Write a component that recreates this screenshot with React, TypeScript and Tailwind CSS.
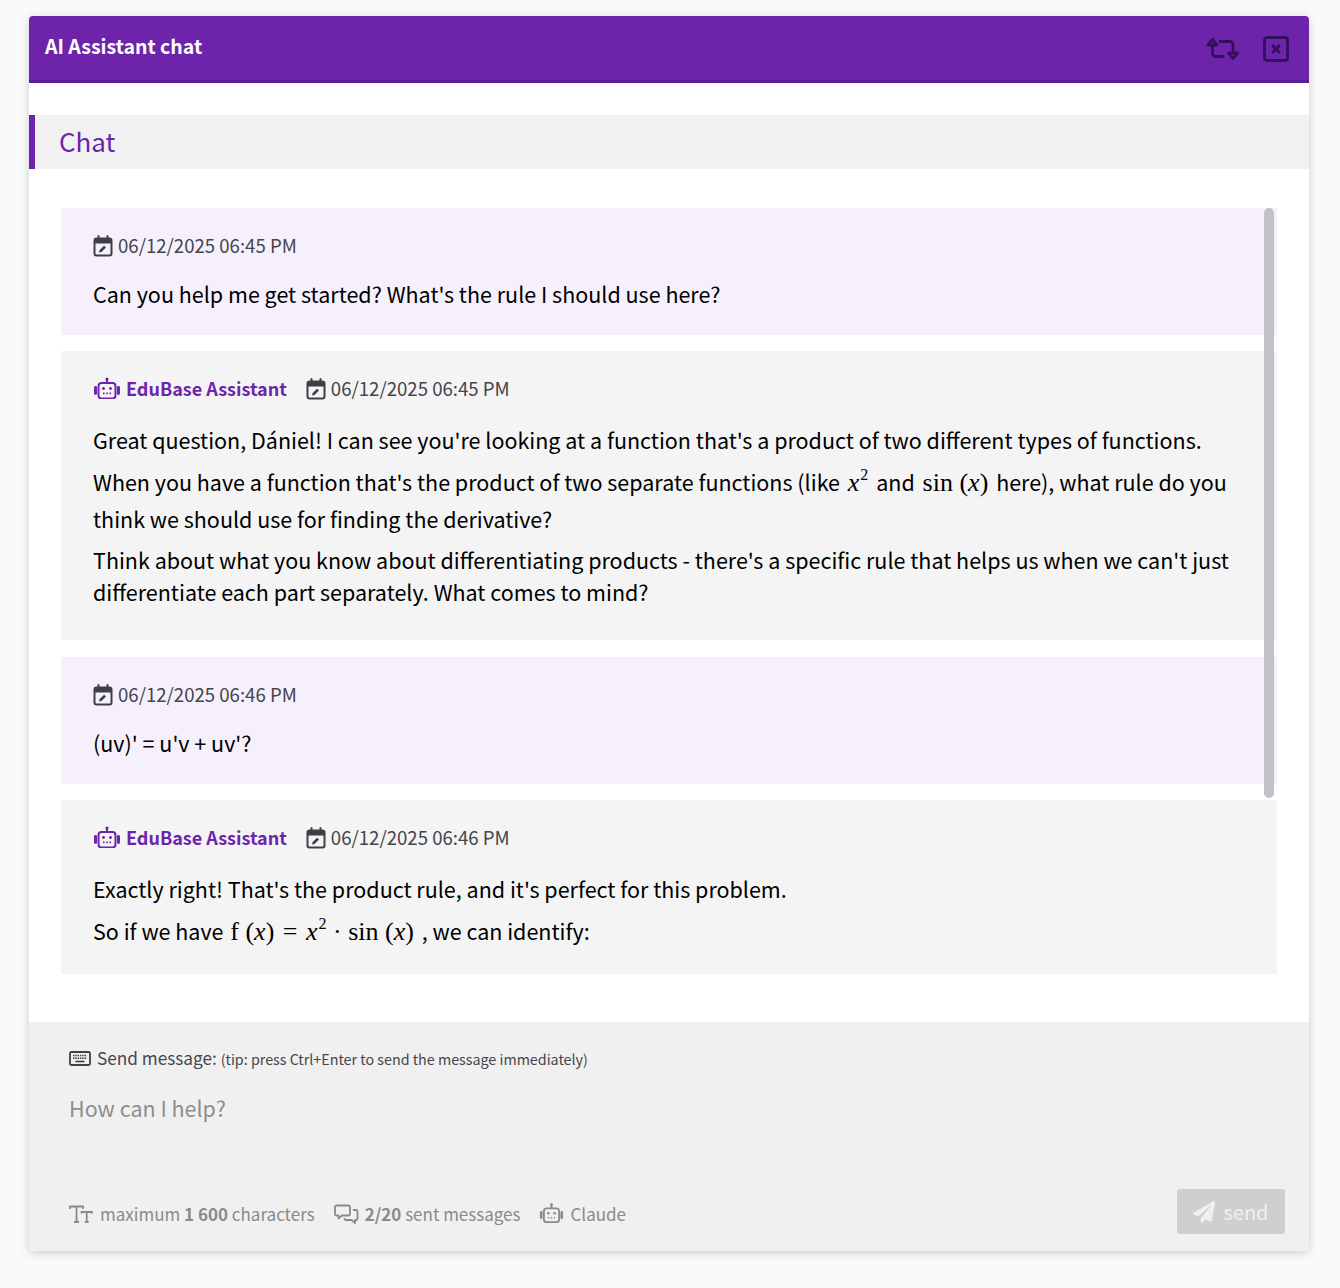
import { FaPaperPlane } from "react-icons/fa";

const font = { fontFamily: '"Noto Sans CJK SC", "Noto Sans", sans-serif' };

function CalendarIcon() {
  return (
    <svg width="20" height="22" viewBox="0 0 20 22" fill="none" className="shrink-0">
      <rect x="1.500" y="3.500" width="17" height="17" rx="2" stroke="#3f3f46" strokeWidth="2" />
      <path d="M1.500 5.500a2 2 0 0 1 2-2h13a2 2 0 0 1 2 2v3h-17z" fill="#3f3f46" />
      <path d="M5.500 1v4M14.500 1v4" stroke="#3f3f46" strokeWidth="2" strokeLinecap="round" />
      <path d="M6 17.500l.6-2.500 4.500-4.300 1.900 1.900-4.500 4.300z" fill="#3f3f46" />
    </svg>
  );
}

function RobotIcon({ color, size = 28 }: { color: string; size?: number }) {
  return (
    <svg width={size} height={size * 0.82} viewBox="0 0 28 23" fill="none" className="-mt-[2px] shrink-0">
      <rect x="5.500" y="6" width="17" height="15.500" rx="3" stroke={color} strokeWidth="2" />
      <path d="M14 6V2" stroke={color} strokeWidth="2" />
      <circle cx="14" cy="2" r="1.600" fill={color} />
      <path d="M2.500 10.500v6M25.500 10.500v6" stroke={color} strokeWidth="3" strokeLinecap="round" />
      <circle cx="10.500" cy="11.500" r="1.500" fill={color} />
      <circle cx="17.500" cy="11.500" r="1.500" fill={color} />
      <path d="M10 16.500h1.600M13.200 16.500h1.600M16.400 16.500h1.600" stroke={color} strokeWidth="1.800" />
    </svg>
  );
}

function SwapIcon() {
  return (
    <svg width="34" height="22" viewBox="0 0 34 22" fill="none" stroke="#33105c" strokeWidth="2.800" strokeLinejoin="round">
      <path d="M6.500 8v7.500a3 3 0 0 0 3 3H17" strokeLinecap="round" />
      <path d="M14 3.500h10a3 3 0 0 1 3 3V14" strokeLinecap="round" />
      <path d="M6.500 1.500L2 7h9z" />
      <path d="M27 20.500L22.500 15h9z" />
    </svg>
  );
}

function CloseIcon() {
  return (
    <svg width="26" height="26" viewBox="0 0 26 26" fill="none" stroke="#33105c" strokeWidth="2.800">
      <rect x="1.500" y="1.500" width="23" height="23" rx="2.500" />
      <path d="M9 9l8 8M17 9l-8 8" strokeWidth="3" />
    </svg>
  );
}

function KeyboardIcon() {
  return (
    <svg width="22" height="15" viewBox="0 0 22 15" fill="none" className="shrink-0">
      <rect x="1" y="1" width="20" height="13" rx="1.500" stroke="#3f3f46" strokeWidth="1.800" />
      <path d="M4 4.500h14M4 7.200h14" stroke="#3f3f46" strokeWidth="1.600" strokeDasharray="1.500 0.800" />
      <path d="M6.500 10.500h9" stroke="#3f3f46" strokeWidth="1.600" />
    </svg>
  );
}

function TextSizeIcon() {
  return (
    <svg width="24" height="18" viewBox="0 0 24 18" fill="none" stroke="#8a8a8a" strokeWidth="1.800" className="shrink-0">
      <path d="M1 4V1.500h13V4M7.500 1.500V17M5 17h5" />
      <path d="M12.500 8.500V7h10.500v1.500M17.700 7v10M15.800 17h3.800" />
    </svg>
  );
}

function MessagesIcon() {
  return (
    <svg width="25" height="20" viewBox="0 0 25 20" fill="none" stroke="#8a8a8a" strokeWidth="1.800" strokeLinejoin="round" className="shrink-0">
      <path d="M2.500 1.500h12a1.500 1.500 0 0 1 1.500 1.500v7a1.500 1.500 0 0 1-1.500 1.500H8l-3.500 3v-3h-2A1.500 1.500 0 0 1 1 10V3a1.500 1.500 0 0 1 1.500-1.500z" />
      <path d="M19 6h3a1.500 1.500 0 0 1 1.500 1.500v7A1.500 1.500 0 0 1 22 16h-1v3l-3.500-3h-5.500a1.500 1.500 0 0 1-1.500-1.500V14" />
    </svg>
  );
}

function Var() {
  return <span className="italic">x</span>;
}

function Math({ children }: { children: React.ReactNode }) {
  return (
    <span className="mx-[3px] text-[26px] leading-none" style={{ fontFamily: '"Liberation Serif", serif' }}>
      {children}
    </span>
  );
}

function Sup() {
  return <span className="relative top-[-11px] ml-[1px] text-[16px] leading-none">2</span>;
}

function Stamp({ time }: { time: string }) {
  return (
    <span className="flex items-center gap-[5px] text-[18.600px] text-[#45454d]">
      <CalendarIcon />
      <span className="-mt-[2px]">{time}</span>
    </span>
  );
}

function UserMessage({ time, text }: { time: string; text: string }) {
  return (
    <div className="bg-[#f6f0fd] px-8 pt-6 pb-[25px]">
      <div className="flex h-7 items-center">
        <Stamp time={time} />
      </div>
      <p className="mt-[18px] text-[21.500px] leading-8 text-black">{text}</p>
    </div>
  );
}

function AssistantHead({ time }: { time: string }) {
  return (
    <div className="flex h-7 items-center">
      <RobotIcon color="#6d24ab" />
      <span className="ml-[5px] -mt-[1px] text-[18px] font-semibold text-[#6d24ab]">EduBase Assistant</span>
      <span className="ml-[19px]">
        <Stamp time={time} />
      </span>
    </div>
  );
}

export default function App() {
  return (
    <div className="min-h-[1288px] bg-[#f9fafa] px-[29px] pt-4" style={font}>
      <div className="w-[1280px] rounded-t-[4px] bg-white shadow-[0_2px_10px_rgba(0,0,0,0.18)]">
        <div className="flex h-[67px] items-center justify-between rounded-t-[4px] border-b-[3px] border-[#5b1f92] bg-[#6d24ab] pl-4 pr-5">
          <h1 className="-mt-[5px] text-[19.500px] font-bold text-white">AI Assistant chat</h1>
          <div className="flex items-center gap-[23px] pt-[2px]">
            <SwapIcon />
            <CloseIcon />
          </div>
        </div>

        <div className="mt-8 flex h-[54px] items-center border-l-[6px] border-[#6d24ab] bg-[#f1f1f1] pl-6">
          <h2 className="-mt-[3px] text-[26px] text-[#6d24ab]">Chat</h2>
        </div>

        <div className="relative mx-8 mt-[39px] flex flex-col gap-4">
          <div className="absolute right-[3px] top-0 h-[590px] w-[10px] rounded-full bg-[#c3c1c7]" />
          <UserMessage time="06/12/2025 06:45 PM" text="Can you help me get started? What's the rule I should use here?" />

          <div className="mb-[1px] bg-[#f4f4f4] px-8 pt-6 pb-8">
            <AssistantHead time="06/12/2025 06:45 PM" />
            <div className="mt-[21px] flex flex-col gap-2 text-[21.500px] leading-8 text-black">
              <p>Great question, Dániel! I can see you're looking at a function that's a product of two different types of functions.</p>
              <p className="-mt-[1px] leading-[37px]">
                When you have a function that's the product of two separate functions (like{" "}
                <Math>
                  <Var />
                  <Sup />
                </Math>{" "}
                and{" "}
                <Math>
                  sin (<Var />)
                </Math>{" "}
                here), what rule do you think we should use for finding the derivative?
              </p>
              <p className="-mt-[1px]">Think about what you know about differentiating products - there's a specific rule that helps us when we can't just differentiate each part separately. What comes to mind?</p>
            </div>
          </div>

          <UserMessage time="06/12/2025 06:46 PM" text="(uv)' = u'v + uv'?" />

          <div className="bg-[#f4f4f4] px-8 pt-6 pb-[25px]">
            <AssistantHead time="06/12/2025 06:46 PM" />
            <div className="mt-[21px] flex flex-col gap-2 text-[21.500px] leading-8 text-black">
              <p>Exactly right! That's the product rule, and it's perfect for this problem.</p>
              <p className="-mt-[1px] leading-[37px]">
                So if we have{" "}
                <span className="-ml-[1px]">
                  <Math>
                    f (<Var />)<span className="mx-[2px]"> = </span><Var />
                    <Sup /> · sin (<Var />)
                  </Math>
                </span>{" "}
                , we can identify:
              </p>
            </div>
          </div>
        </div>

        <div className="mt-12 h-[229px] bg-[#f0f0f0] px-10 pt-[22px]">
          <div className="flex h-7 items-center gap-[6px] text-[#45454d]">
            <KeyboardIcon />
            <span className="text-[17.200px]">Send message:</span>
            <span className="mt-[2px] -ml-[2px] text-[14.300px]">(tip: press Ctrl+Enter to send the message immediately)</span>
          </div>
          <textarea
            readOnly
            placeholder="How can I help?"
            className="mt-5 block h-[74px] w-full resize-none bg-transparent text-[21.500px] leading-8 outline-none placeholder:text-[#8e8e8e]"
          />
          <div className="mt-[23px] flex items-center justify-between">
            <div className="mt-[5px] flex items-center text-[17px] text-[#8a8a8a]">
              <TextSizeIcon />
              <span className="ml-[7px]">
                maximum <b className="font-bold">1 600</b> characters
              </span>
              <span className="ml-[19px]">
                <MessagesIcon />
              </span>
              <span className="ml-[6px]">
                <b className="font-bold">2/20</b> sent messages
              </span>
              <span className="ml-[19px]">
                <RobotIcon color="#8a8a8a" size={25} />
              </span>
              <span className="ml-[6px]">Claude</span>
            </div>
            <button className="mr-[-16px] flex h-[45px] w-[108px] items-center justify-center gap-2 rounded-[3px] bg-[#cfcfcf] text-[20px] text-[#f0f0f0]">
              <FaPaperPlane className="text-[22px]" />
              <span>send</span>
            </button>
          </div>
        </div>
      </div>
    </div>
  );
}
